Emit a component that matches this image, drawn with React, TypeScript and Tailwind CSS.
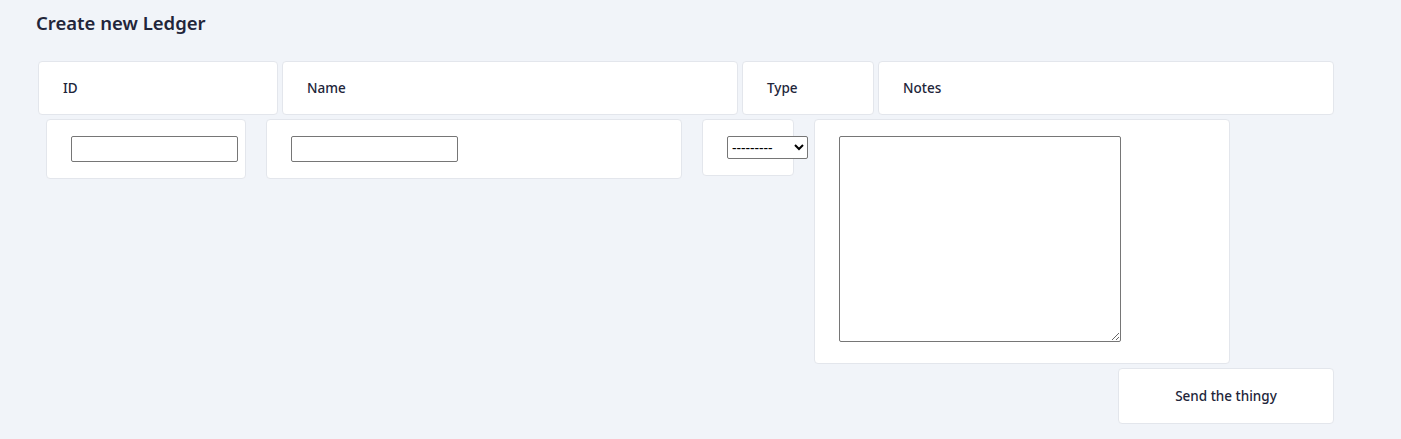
import React from "react";

function Cell({ className = "", children }: { className?: string; children?: React.ReactNode }) {
  return (
    <div className={`bg-white border border-[#e3e6ec] rounded-[4px] ${className}`}>{children}</div>
  );
}

export default function App() {
  return (
    <div className="min-h-[439px] bg-[#f1f4f9] text-[#22253a]" style={{ fontFamily: '"Noto Sans", "Open Sans", sans-serif' }}>
      <h1 className="pl-[36px] pt-[9px] text-[18.5px] font-semibold leading-[28px]">Create new Ledger</h1>

      <div className="flex gap-[4px] pl-[38px] mt-[24px]">
        <Cell className="w-[240px] h-[54px] flex items-center pl-[24px] text-[13.5px] font-medium">ID</Cell>
        <Cell className="w-[456px] h-[54px] flex items-center pl-[24px] text-[13.5px] font-medium">Name</Cell>
        <Cell className="w-[132px] h-[54px] flex items-center pl-[24px] text-[13.5px] font-medium">Type</Cell>
        <Cell className="w-[456px] h-[54px] flex items-center pl-[24px] text-[13.5px] font-medium">Notes</Cell>
      </div>

      <div className="flex items-start gap-[20px] pl-[46px] mt-[4px]">
        <Cell className="w-[200px] h-[60px] pl-[24px] pt-[16px]">
          <input type="text" className="block w-[167px] h-[26px] border border-[#767676] rounded-[2px] bg-white" />
        </Cell>
        <Cell className="w-[416px] h-[60px] pl-[24px] pt-[16px]">
          <input type="text" className="block w-[167px] h-[26px] border border-[#767676] rounded-[2px] bg-white" />
        </Cell>
        <Cell className="w-[92px] h-[57px] pl-[24px] pt-[16px]">
          <select className="block w-[81px] h-[23px] border border-[#767676] rounded-[2px] bg-white text-[14px] text-black" style={{ fontFamily: '"Noto Sans", Arial, sans-serif' }}>
            <option>---------</option>
          </select>
        </Cell>
        <Cell className="w-[416px] h-[245px] pl-[24px] pt-[16px]">
          <textarea className="block w-[282px] h-[206px] border border-[#767676] rounded-[2px] bg-white resize" />
        </Cell>
      </div>

      <div className="flex pl-[1118px] mt-[4px]">
        <Cell className="w-[216px] h-[56px] flex items-center justify-center text-[13.5px] font-medium">Send the thingy</Cell>
      </div>
    </div>
  );
}
